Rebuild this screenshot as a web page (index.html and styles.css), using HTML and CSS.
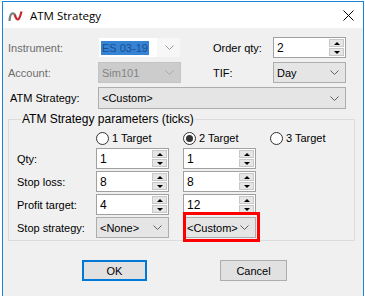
FILE: index.html
```html
<!DOCTYPE html>
<html lang="en">
<head>
    <meta charset="UTF-8">
    <title>ATM Strategy</title>
    <link rel="stylesheet" href="styles.css">
</head>
<body>

    <div class="window">

        <header class="titlebar">
            <svg class="app-icon" width="15" height="12" viewBox="0 0 15 12">
                <path d="M1.5 11 C2 3 5 1 7.5 6" fill="none" stroke="#7d7d7d" stroke-width="2.2"/>
                <path d="M6.8 5 C9 11 11 12 13.5 1.5" fill="none" stroke="#c8262c" stroke-width="2.2"/>
            </svg>
            <span class="title">ATM Strategy</span>
            <svg class="close" width="11" height="11" viewBox="0 0 11 11">
                <path d="M0.5 0.5 L10.5 10.5 M10.5 0.5 L0.5 10.5" stroke="#000" stroke-width="1"/>
            </svg>
        </header>

        <main class="content">

            <section class="top">
                <label class="lbl dim">Instrument:</label>
                <div class="combo combo-edit">
                    <span class="field"><span class="sel">ES 03-19</span></span>
                    <svg class="chev" width="9" height="5"><polyline points="0.5,0.5 4.5,4.5 8.5,0.5" fill="none" stroke="#9a9a9a"/></svg>
                </div>
                <span></span>
                <label class="lbl">Order qty:</label>
                <div class="spin">
                    <span class="val">2</span>
                    <div class="spin-btns"><b class="up"></b><b class="down"></b></div>
                </div>

                <label class="lbl dim">Account:</label>
                <div class="combo combo-off">
                    <span class="val">Sim101</span>
                    <svg class="chev" width="9" height="5"><polyline points="0.5,0.5 4.5,4.5 8.5,0.5" fill="none" stroke="#a8a8a8"/></svg>
                </div>
                <span></span>
                <label class="lbl">TIF:</label>
                <div class="combo">
                    <span class="val">Day</span>
                    <svg class="chev" width="9" height="5"><polyline points="0.5,0.5 4.5,4.5 8.5,0.5" fill="none" stroke="#606060"/></svg>
                </div>

                <label class="lbl lbl-atm">ATM Strategy:</label>
                <div class="combo combo-wide">
                    <span class="val">&lt;Custom&gt;</span>
                    <svg class="chev" width="9" height="5"><polyline points="0.5,0.5 4.5,4.5 8.5,0.5" fill="none" stroke="#606060"/></svg>
                </div>
            </section>

            <fieldset class="params">
                <legend>ATM Strategy parameters (ticks)</legend>

                <div class="grid">
                    <span></span>
                    <label class="radio"><i class="dot"></i>1 Target</label>
                    <label class="radio"><i class="dot on"></i>2 Target</label>
                    <label class="radio"><i class="dot"></i>3 Target</label>

                    <label class="lbl">Qty:</label>
                    <div class="spin"><span class="val">1</span><div class="spin-btns"><b class="up"></b><b class="down"></b></div></div>
                    <div class="spin"><span class="val">1</span><div class="spin-btns"><b class="up"></b><b class="down"></b></div></div>
                    <span></span>

                    <label class="lbl">Stop loss:</label>
                    <div class="spin"><span class="val">8</span><div class="spin-btns"><b class="up"></b><b class="down"></b></div></div>
                    <div class="spin"><span class="val">8</span><div class="spin-btns"><b class="up"></b><b class="down"></b></div></div>
                    <span></span>

                    <label class="lbl">Profit target:</label>
                    <div class="spin"><span class="val">4</span><div class="spin-btns"><b class="up"></b><b class="down"></b></div></div>
                    <div class="spin"><span class="val">12</span><div class="spin-btns"><b class="up"></b><b class="down"></b></div></div>
                    <span></span>

                    <label class="lbl">Stop strategy:</label>
                    <div class="combo">
                        <span class="val">&lt;None&gt;</span>
                        <svg class="chev" width="9" height="5"><polyline points="0.5,0.5 4.5,4.5 8.5,0.5" fill="none" stroke="#606060"/></svg>
                    </div>
                    <div class="combo marked">
                        <span class="val">&lt;Custom&gt;</span>
                        <svg class="chev" width="9" height="5"><polyline points="0.5,0.5 4.5,4.5 8.5,0.5" fill="none" stroke="#606060"/></svg>
                    </div>
                    <span></span>
                </div>
            </fieldset>

            <footer class="buttons">
                <button class="btn btn-default">OK</button>
                <button class="btn">Cancel</button>
            </footer>

        </main>
    </div>

</body>
</html>
```

FILE: styles.css
```css
html, body {
    margin: 0;
    padding: 0;
}

body {
    background: #ffffff;
    font-family: "Liberation Sans", Arial, sans-serif;
    font-size: 11px;
    color: #000;
    overflow: hidden;
}

.window {
    box-sizing: border-box;
    width: 362px;
    height: 296px;
    margin: 1px 0 0 2px;
    border: 1px solid #1883d7;
    border-bottom: 0;
    background: #f0f0f0;
    overflow: hidden;
}

/* title bar */

.titlebar {
    height: 26px;
    background: #fff;
    display: flex;
    align-items: center;
}

.app-icon {
    margin: 1px 0 0 5px;
}

.title {
    margin-left: 7px;
    font-family: "Open Sans", sans-serif;
    font-size: 11.5px;
    color: #000;
}

.close {
    margin: 0 9px 0 auto;
}

/* top fields */

.content {
    padding: 9px 0 0 0;
}

.top {
    display: grid;
    grid-template-columns: 90px 83px 32px 60px 73px;
    grid-template-rows: 21px 21px 22px;
    row-gap: 4px;
    padding-left: 5px;
    align-items: center;
}

.lbl {
    white-space: nowrap;
}

.dim {
    color: #6d6d6d;
}

.lbl-atm {
    padding-left: 2px;
}

.combo, .spin {
    box-sizing: border-box;
    height: 100%;
    display: flex;
    align-items: center;
    border: 1px solid #adadad;
    background: #e5e5e5;
}

.combo .val {
    flex: 1;
    padding-left: 3px;
}

.chev {
    margin-right: 6px;
}

.combo-edit {
    border-color: #f0f0f0;
    background: #f7f7f7;
}

.combo-edit .field {
    flex: 1;
    align-self: stretch;
    display: flex;
    align-items: center;
    background: #fff;
    margin-right: 8px;
    padding-left: 2px;
}

.sel {
    background: #3483d4;
    color: #1f4f8f;
    padding: 1px 1px;
}

.combo-off {
    background: #cccccc;
    border-color: #c4c4c4;
    color: #838383;
}

.combo-wide {
    grid-column: 2 / 6;
}

/* spin box */

.spin {
    background: #fff;
    border-color: #a0a0a0;
    padding: 1px;
}

.spin .val {
    flex: 1;
    padding-left: 2px;
    font-size: 12px;
}

.spin-btns {
    width: 15px;
    height: 100%;
    display: flex;
    flex-direction: column;
    gap: 1px;
}

.spin-btns b {
    flex: 1;
    background: #e6e6e6;
    border: 1px solid #c8c8c8;
    display: flex;
    align-items: center;
    justify-content: center;
}

.spin-btns b::before {
    content: "";
    border-left: 3px solid transparent;
    border-right: 3px solid transparent;
}

.spin-btns .up::before {
    border-bottom: 3px solid #000;
}

.spin-btns .down::before {
    border-top: 3px solid #000;
}

/* parameters group */

.params {
    margin: 4px 0 0 5px;
    width: 347px;
    box-sizing: border-box;
    border: 1px solid #dcdcdc;
    padding: 0 0 2px 8px;
}

.params legend {
    padding: 0 1px;
    margin-left: 4px;
    font-size: 12px;
    line-height: 13px;
}

.grid {
    display: grid;
    grid-template-columns: 65px 73px 73px auto;
    column-gap: 14px;
    grid-template-rows: 14px 21px 21px 21px 21px;
    row-gap: 2px;
    align-items: center;
    padding-top: 6px;
}

.grid > :nth-child(-n+4) {
    margin-bottom: 2px;
}

.radio {
    display: flex;
    align-items: center;
    gap: 3px;
    white-space: nowrap;
}

.dot {
    box-sizing: border-box;
    width: 13px;
    height: 13px;
    border: 1px solid #333;
    border-radius: 50%;
    background: #fff;
    display: flex;
    align-items: center;
    justify-content: center;
}

.dot.on::after {
    content: "";
    width: 7px;
    height: 7px;
    border-radius: 50%;
    background: #333;
}

.marked {
    position: relative;
}

/* red highlight drawn over the control */
.marked::after {
    content: "";
    position: absolute;
    top: -6px;
    left: -1px;
    right: -5px;
    bottom: -5px;
    border: 3px solid #ff0000;
}

/* buttons */

.buttons {
    display: flex;
    gap: 73px;
    padding: 19px 0 0 79px;
}

.btn {
    box-sizing: border-box;
    width: 65px;
    height: 21px;
    border: 1px solid #adadad;
    background: #e1e1e1;
    font-family: "Liberation Sans", Arial, sans-serif;
    font-size: 11px;
    color: #000;
    padding: 0;
}

.btn + .btn {
    width: 67px;
}

.btn-default {
    border: 2px solid #0078d7;
}
```
